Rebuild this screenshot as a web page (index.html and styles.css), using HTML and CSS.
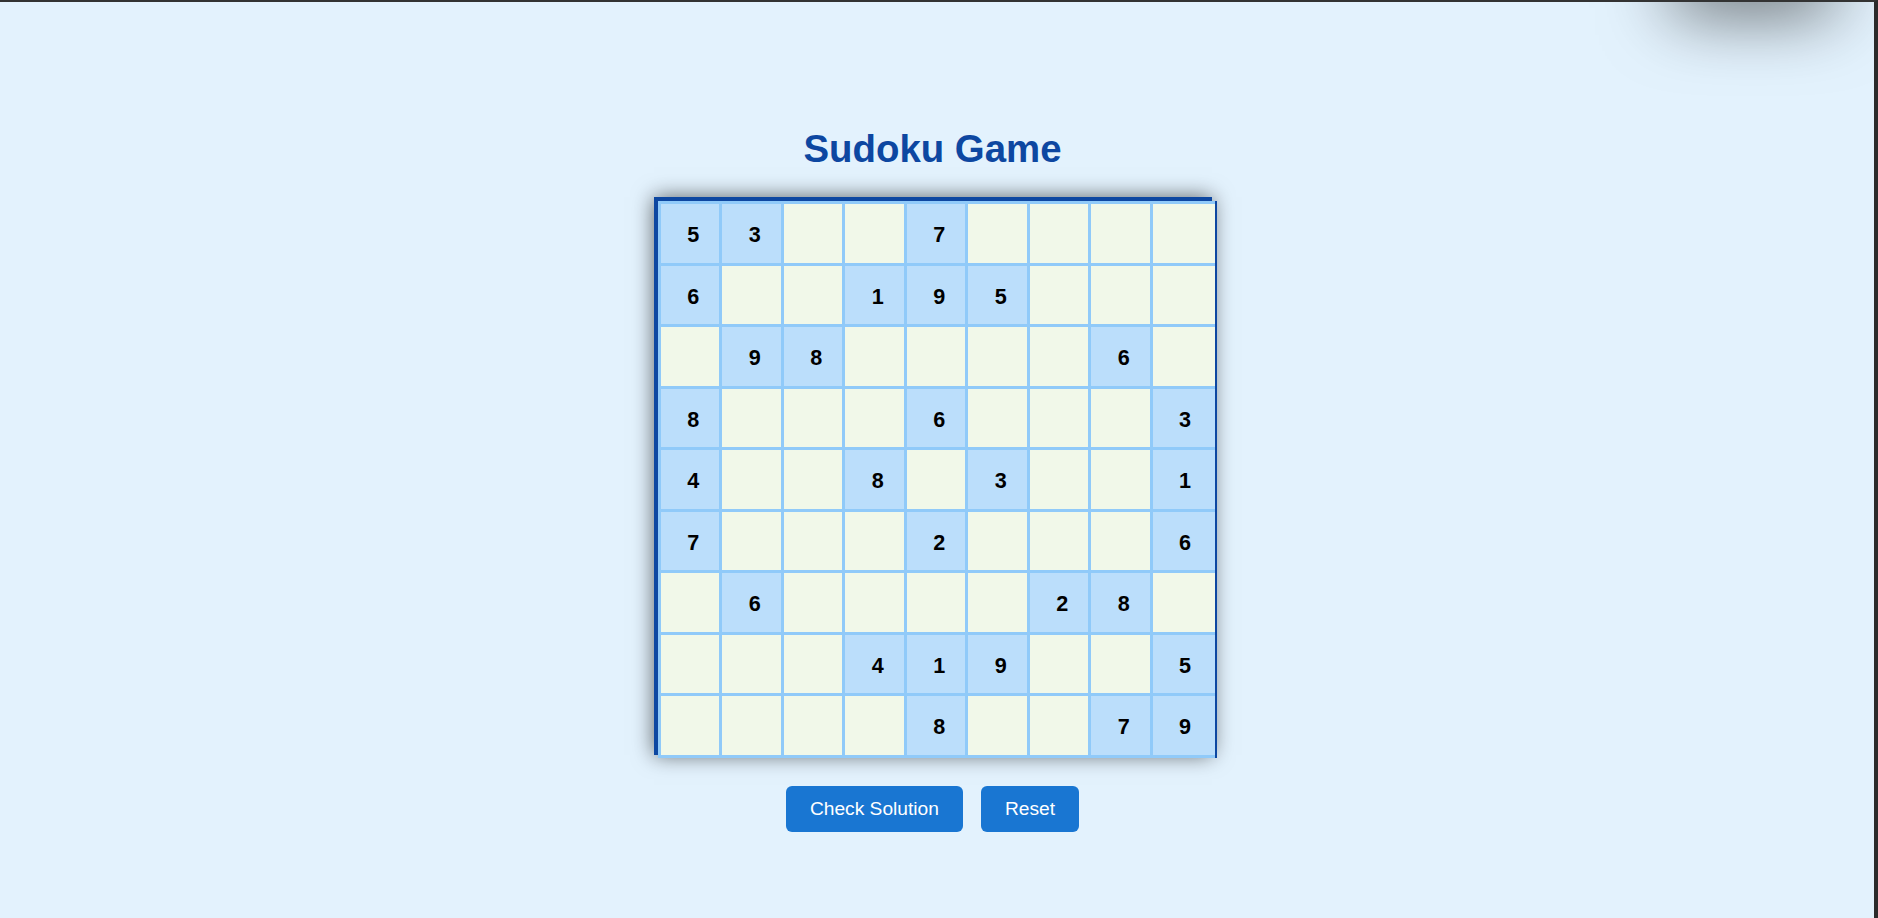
FILE: index.html
```html
<!DOCTYPE html>
<html lang="en">
<head>
<meta charset="utf-8">
<title>Sudoku Game</title>
<link rel="stylesheet" href="styles.css">
</head>
<body>
<div class="toast-shadow"></div>
<main class="app">
  <h1 class="title">Sudoku Game</h1>
  <div class="board">
    <div class="grid">
      <div class="cell given">5</div><div class="cell given">3</div><div class="cell"></div><div class="cell"></div><div class="cell given">7</div><div class="cell"></div><div class="cell"></div><div class="cell"></div><div class="cell"></div>
      <div class="cell given">6</div><div class="cell"></div><div class="cell"></div><div class="cell given">1</div><div class="cell given">9</div><div class="cell given">5</div><div class="cell"></div><div class="cell"></div><div class="cell"></div>
      <div class="cell"></div><div class="cell given">9</div><div class="cell given">8</div><div class="cell"></div><div class="cell"></div><div class="cell"></div><div class="cell"></div><div class="cell given">6</div><div class="cell"></div>
      <div class="cell given">8</div><div class="cell"></div><div class="cell"></div><div class="cell"></div><div class="cell given">6</div><div class="cell"></div><div class="cell"></div><div class="cell"></div><div class="cell given">3</div>
      <div class="cell given">4</div><div class="cell"></div><div class="cell"></div><div class="cell given">8</div><div class="cell"></div><div class="cell given">3</div><div class="cell"></div><div class="cell"></div><div class="cell given">1</div>
      <div class="cell given">7</div><div class="cell"></div><div class="cell"></div><div class="cell"></div><div class="cell given">2</div><div class="cell"></div><div class="cell"></div><div class="cell"></div><div class="cell given">6</div>
      <div class="cell"></div><div class="cell given">6</div><div class="cell"></div><div class="cell"></div><div class="cell"></div><div class="cell"></div><div class="cell given">2</div><div class="cell given">8</div><div class="cell"></div>
      <div class="cell"></div><div class="cell"></div><div class="cell"></div><div class="cell given">4</div><div class="cell given">1</div><div class="cell given">9</div><div class="cell"></div><div class="cell"></div><div class="cell given">5</div>
      <div class="cell"></div><div class="cell"></div><div class="cell"></div><div class="cell"></div><div class="cell given">8</div><div class="cell"></div><div class="cell"></div><div class="cell given">7</div><div class="cell given">9</div>
    </div>
  </div>
  <div class="actions">
    <button class="btn" type="button">Check Solution</button>
    <button class="btn" type="button">Reset</button>
  </div>
</main>
<div class="frame"></div>
</body>
</html>
```

FILE: styles.css
```css
html, body {
  margin: 0;
  padding: 0;
  height: 100%;
}

body {
  background: #e3f2fd;
  font-family: "Liberation Sans", Arial, sans-serif;
  overflow: hidden;
}

.app {
  width: calc(100% - 13px);
  display: flex;
  flex-direction: column;
  align-items: center;
}

.title {
  margin: 127px 0 0;
  font-size: 38.4px;
  line-height: 44px;
  font-weight: bold;
  color: #0d47a1;
}

.board {
  margin-top: 26px;
  box-sizing: border-box;
  width: 558px;
  height: 558px;
  border: 4px solid #0d47a1;
  box-shadow: 0 0 20px rgba(0, 0, 0, 0.6);
}

.grid {
  display: grid;
  grid-template-columns: repeat(8, 58.5px) 62px;
  grid-template-rows: repeat(9, 58.5px);
  gap: 3px;
  padding: 3px 0 3px 3px;
  width: max-content;
  background: #90caf9;
  border-right: 2px solid #0d47a1;
}

.cell {
  display: flex;
  align-items: center;
  justify-content: center;
  box-sizing: border-box;
  padding: 4px 0 0 7px;
  background: #f1f8e9;
  font-size: 21.6px;
  font-weight: bold;
  color: #000;
}

.cell:nth-child(9n) {
  padding-right: 4px;
}

.cell.given {
  background: #bbdefb;
}

.actions {
  margin-top: 31px;
  display: flex;
  gap: 18px;
}

.btn {
  font-family: "Liberation Sans", Arial, sans-serif;
  font-size: 19.2px;
  line-height: 22px;
  padding: 12px 24px;
  border: none;
  border-radius: 6px;
  background: #1976d2;
  color: #fff;
  cursor: pointer;
}

.toast-shadow {
  position: fixed;
  top: -70px;
  right: 45px;
  width: 160px;
  height: 60px;
  background: #e3f2fd;
  box-shadow: 0 22px 70px rgba(0, 0, 0, 0.6);
}

.frame {
  position: fixed;
  inset: 0;
  border-top: 2px solid #333;
  border-right: 4px solid #2b2b2b;
  pointer-events: none;
}
```
